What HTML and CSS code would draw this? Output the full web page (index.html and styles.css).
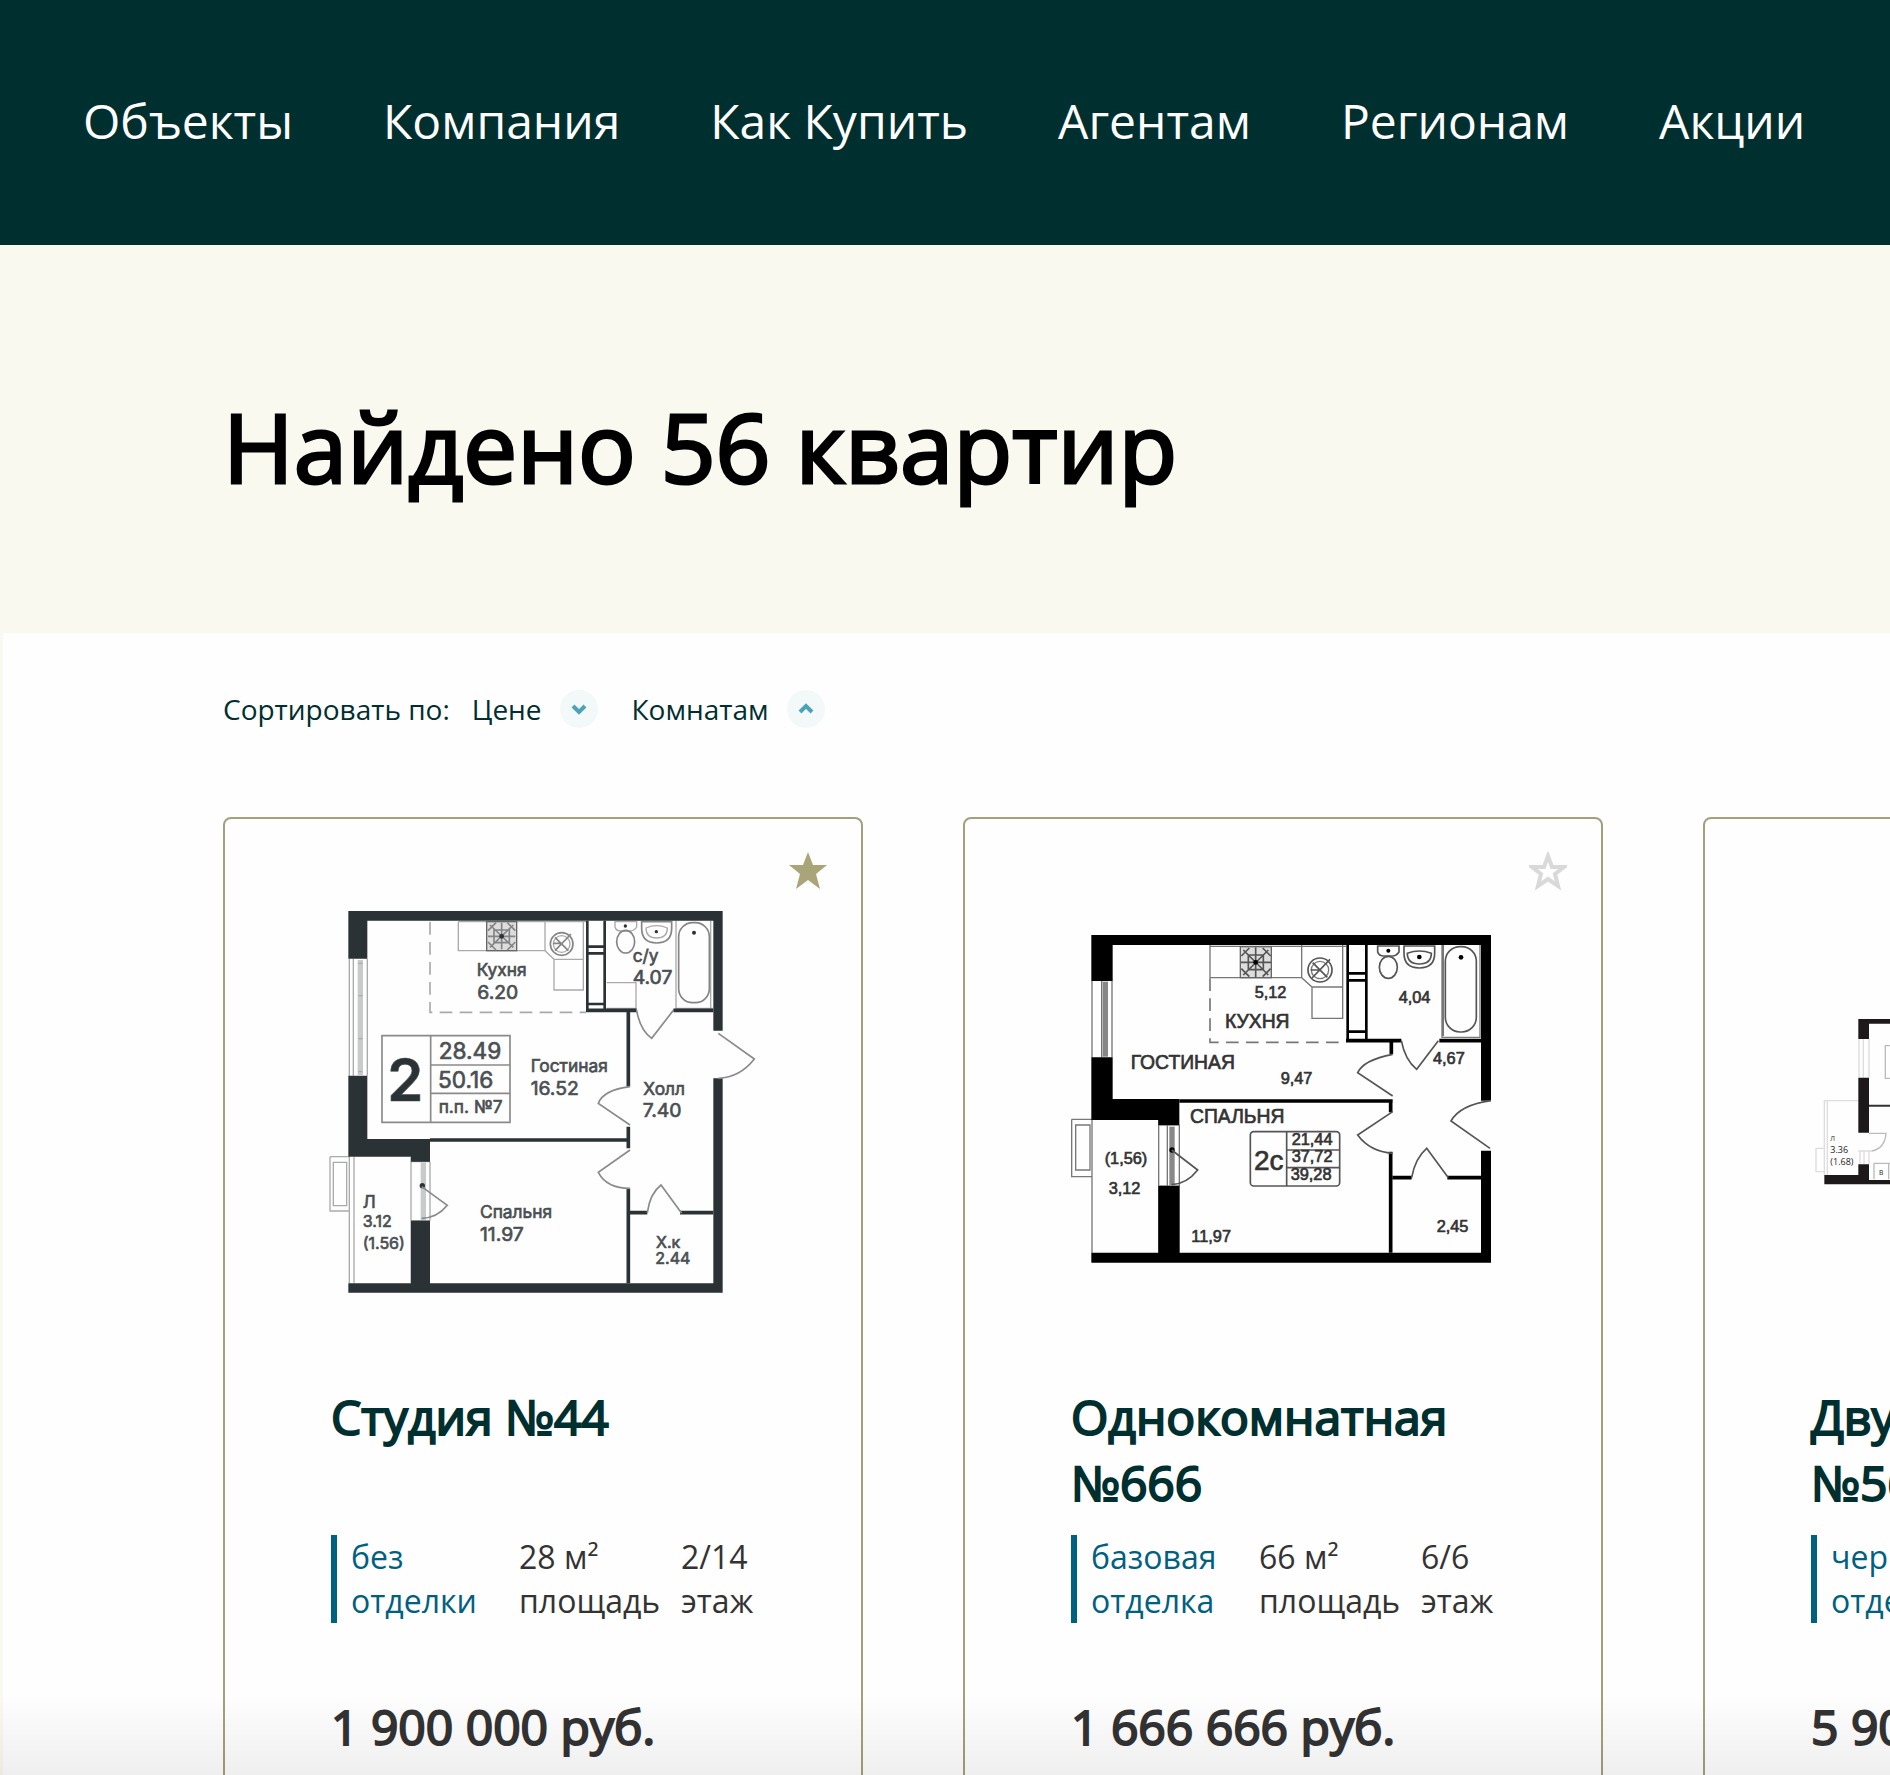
FILE: index.html
```html
<!DOCTYPE html>
<html lang="ru">
<head>
<meta charset="utf-8">
<meta name="viewport" content="width=device-width, initial-scale=1">
<title>Найдено 56 квартир</title>
<link rel="stylesheet" href="styles.css">
</head>
<body>
<header class="header">
  <nav class="nav">
    <a href="#">Объекты</a>
    <a href="#">Компания</a>
    <a href="#">Как Купить</a>
    <a href="#">Агентам</a>
    <a href="#">Регионам</a>
    <a href="#">Акции</a>
  </nav>
</header>
<section class="hero">
  <h1 class="hero-title">Найдено 56 квартир</h1>
</section>
<main class="results">
  <div class="sort">
    <span>Сортировать по:</span>
    <button class="sort-button" type="button">Цене
      <svg class="sort-icon" viewBox="0 0 38 38"><circle cx="19" cy="19" r="19"/><path d="M13 16l6 6 6-6"/></svg>
    </button>
    <button class="sort-button" type="button">Комнатам
      <svg class="sort-icon" viewBox="0 0 38 38"><circle cx="19" cy="19" r="19"/><path d="M13 22l6-6 6 6"/></svg>
    </button>
  </div>
  <div class="cards">
    <article class="card">
      <button class="favorite is-active" type="button" aria-label="Убрать из избранного">
        <svg viewBox="0 0 38 38"><path d="M19 0l5 13h14L27 22l4 15-12-9-12 9 4-15L0 13h14z"/></svg>
      </button>
      <svg class="plan plan-slate" viewBox="63 174 1272 1272">
        <g class="thin">
          <path d="M118 386V737M130 386V737M172 386V737"/>
          <path class="glass" d="M151 390V735"/>
          <path d="M145 497h12M145 626h12M145 400h12M145 725h12"/>
          <path class="dashed" d="M360 276V547H828"/>
          <path d="M445 275V362H705L732 388H820M705 275V362M732 388V480H820V275M445 275H828"/>
          <rect x="530" y="275" width="90" height="87" class="hatch"/>
          <path class="mid" d="M540 285l70 67M610 285l-70 67M575 278v80M534 319h82M552 300h46v38h-46zM534 302l24-24M592 278l24 24M534 336l24 24M592 360l24-24"/>
          <circle class="mid" cx="755" cy="342" r="34"/><circle cx="755" cy="342" r="25"/>
          <path class="mid" d="M735 322l40 40M735 362l48-50M730 340h22"/>
          <path d="M915 275h65v16q-8 12-20 12h-28q-14 0-17-12z"/><ellipse class="mid" cx="947" cy="335" rx="27" ry="34"/>
          <path class="mid" d="M995 275h90v20q0 44-45 44t-45-44z"/><path d="M1008 294q32-14 64 0 0 30-32 30t-32-30z"/>
          <path d="M1098 272V535H1208M1202 272V535M890 458H978V535H890"/>
          <rect class="mid" x="1106" y="278" width="92" height="240" rx="42"/>
          <path d="M60 980H118M60 980V1143H118M70 997H110V1127H70zM118 980V1360M132 980V1360M303 980V1360M303 995H360M303 1172H360M360 995V1172"/>
          <path class="glass" d="M340 997V1170"/>
        </g>
        <g class="dots"><circle cx="946" cy="288" r="5"/><circle cx="1039" cy="305" r="5"/><circle cx="1152" cy="308" r="6"/><circle cx="575" cy="319" r="7"/><circle cx="337" cy="1067" r="8"/></g>
        <path class="wall" d="M115 243H1238V602H1210V272H172V386H115zM115 737H172V927H360V995H303V980H115zM303 1172H360V1360H1210V745H1238V1388H115V1360H303z"/>
        <path class="partition" d="M360 930H960M955 540V770M955 890V955M955 1075V1360M955 1148H1012M1110 1148H1210M828 541H980M1090 541H1210"/>
        <path class="shaft" d="M832 272V545M884 272V545M832 350H884M832 370H884M832 522H884"/>
        <path class="door" d="M980 541Q990 600 1025 625L1090 541M1225 610L1333 687Q1290 742 1225 745M960 770Q880 780 865 820L960 885M960 960L865 1027Q890 1075 960 1075M1012 1148Q1020 1090 1053 1065L1115 1150M335 1070L412 1126Q380 1165 335 1165"/>
        <path class="door" d="M216 617H600V877H216zM362 617V877M362 705H600M362 790H600"/>
        <text class="t-xl" x="232" y="812">2</text>
        <text class="t-lg" x="386" y="686">28.49</text>
        <text class="t-lg" x="384" y="775">50.16</text>
        <text class="t-md" x="386" y="850">п.п. №7</text>
        <text class="t-md" x="500" y="437">Кухня</text>
        <text class="t-num" x="502" y="507">6.20</text>
        <text class="t-md" x="968" y="395">с/у</text>
        <text class="t-num" x="968" y="463">4.07</text>
        <text class="t-md" x="662" y="727">Гостиная</text>
        <text class="t-num" x="662" y="795">16.52</text>
        <text class="t-md" x="1000" y="795">Холл</text>
        <text class="t-num" x="998" y="862">7.40</text>
        <text class="t-md" x="510" y="1163">Спальня</text>
        <text class="t-num" x="510" y="1232">11.97</text>
        <text class="t-md" x="158" y="1133">Л</text>
        <text class="t-sm" x="158" y="1190">3.12</text>
        <text class="t-sm" x="158" y="1257">(1.56)</text>
        <text class="t-sm" x="1038" y="1254">Х.к</text>
        <text class="t-sm" x="1036" y="1302">2.44</text>
      </svg>
      <h2 class="card-title">Студия №44</h2>
      <div class="details">
        <div class="finish">без<br>отделки</div>
        <div>28 м²<br>площадь</div>
        <div>2/14<br>этаж</div>
      </div>
      <div class="price">1 900 000 руб.</div>
    </article>

    <article class="card">
      <button class="favorite" type="button" aria-label="Добавить в избранное">
        <svg viewBox="0 0 38 38"><path d="M19 4l4 11h12l-9 7 3 12-10-7-10 7 3-12-9-7h12z"/></svg>
      </button>
      <svg class="plan plan-black" viewBox="63 174 1272 1272">
        <g class="thin">
          <path d="M126 453V682M186 453V682M155 453V682"/>
          <path class="glass" d="M166 455V680"/>
          <path class="dashed" d="M480 445V637H888"/>
          <path d="M480 345V443H755L786 471H878M755 345V443M786 471V565H878V345M480 349H888"/>
          <rect x="571" y="350" width="93" height="93" class="hatch"/>
          <path class="mid" d="M580 360l75 75M655 360l-75 75M617 352v90M573 397h90M595 375h45v44h-45zM574 378l24-24M638 354l24 24M574 416l24 24M638 440l24-24"/>
          <circle class="mid" cx="810" cy="420" r="36"/><circle cx="810" cy="420" r="26"/>
          <path class="mid" d="M788 398l44 44M786 444l54-56M782 420h26"/>
          <path class="mid" d="M983 348h64v18q-8 12-20 12h-26q-14 0-18-12z"/><ellipse class="mid" cx="1015" cy="412" rx="27" ry="33"/>
          <path class="mid" d="M1062 348h92v22q0 44-46 44t-46-44z"/><path class="mid" d="M1072 370q36-14 72 0 0 32-36 32t-36-32z"/>
          <path d="M1176 345V622H1290V345M1180 345V618"/>
          <rect class="mid" x="1186" y="350" width="93" height="256" rx="44"/>
          <path d="M65 868H126M65 868V1040H126M77 885H120V1020H77zM126 870V1268M326 870V1268M325 885H388M325 1068H388M352 885V1068M388 885V1268"/>
          <path class="glass" d="M366 890V1065"/>
        </g>
        <g class="dots"><circle cx="1015" cy="362" r="6"/><circle cx="1108" cy="381" r="7"/><circle cx="1233" cy="382" r="7"/><circle cx="617" cy="397" r="7"/><circle cx="366" cy="960" r="8"/></g>
        <path class="wall" d="M124 315H1323V812H1293V345H188V453H124zM124 682H188V807H388V885H325V870H124zM325 1068H388V1268H1293V962H1323V1298H124V1268H325z"/>
        <path class="partition" d="M388 813H1028M1022 813V847M1022 965V1268M1028 1043H1085M1192 1043H1293M888 632H1054M1168 632H1293M1024 632V672"/>
        <path class="shaft" d="M893 345V635M949 345V635M893 430H949M893 451H949M893 605H949"/>
        <path class="door" d="M1054 632Q1065 690 1100 718L1165 632M1028 673Q940 690 923 728L1028 798M1028 845L923 915Q960 965 1028 970M1323 812Q1230 825 1203 873L1320 955M1085 1043Q1095 985 1130 955L1195 1043M365 960L443 1020Q410 1062 365 1064"/>
        <rect class="door" x="601" y="905" width="268" height="163" rx="10"/>
        <path class="door" d="M710 905V1068M710 960H869M710 1013H869"/>
        <text class="t-big" x="612" y="1020">2с</text>
        <text class="t-sm" x="725" y="946">21,44</text>
        <text class="t-sm" x="725" y="997">37,72</text>
        <text class="t-sm" x="722" y="1050">39,28</text>
        <text class="t-sm" x="614" y="505">5,12</text>
        <text class="t-md" x="525" y="595">КУХНЯ</text>
        <text class="t-md" x="242" y="718">ГОСТИНАЯ</text>
        <text class="t-sm" x="692" y="763">9,47</text>
        <text class="t-sm" x="1046" y="518">4,04</text>
        <text class="t-sm" x="1149" y="703">4,67</text>
        <text class="t-md" x="420" y="878">СПАЛЬНЯ</text>
        <text class="t-sm" x="164" y="1003">(1,56)</text>
        <text class="t-sm" x="176" y="1093">3,12</text>
        <text class="t-sm" x="424" y="1236">11,97</text>
        <text class="t-sm" x="1160" y="1205">2,45</text>
      </svg>
      <h2 class="card-title">Однокомнатная №666</h2>
      <div class="details">
        <div class="finish">базовая<br>отделка</div>
        <div>66 м²<br>площадь</div>
        <div>6/6<br>этаж</div>
      </div>
      <div class="price">1 666 666 руб.</div>
    </article>

    <article class="card">
      <svg class="plan plan-small" viewBox="363 264 1272 1272">
        <g class="thin">
          <path d="M507 717V833M520 717V833M537 717V833M403 1125V902H505M412 902V1125M403 1045H378V1115H403M510 1053V1093M522 1053V1093M537 1053V1093M505 1053H545"/>
          <path class="mid" d="M650 737H586V835H650M640 1090H552V1138M596 1090V1138M537 1000H588Q585 1045 545 1053"/>
        </g>
        <path class="wall" d="M505 657H1500V671H537V717H505zM505 833H537V998H505zM505 1093H537V1140H1500V1153H403V1125H505z"/>
        <path class="partition" d="M537 917H1500"/>
        <text class="t-sm" x="421" y="1023">Л</text>
        <text class="t-md" x="421" y="1060">3.36</text>
        <text class="t-md" x="421" y="1095">(1.68)</text>
        <text class="t-sm" x="567" y="1124">В</text>
      </svg>
      <h2 class="card-title">Двухкомнатная №56</h2>
      <div class="details">
        <div class="finish">черновая<br>отделка</div>
        <div>56 м²<br>площадь</div>
        <div>5/9<br>этаж</div>
      </div>
      <div class="price">5 900 000 руб.</div>
    </article>
  </div>
</main>
<div class="bottom-fade"></div>
</body>
</html>
```
FILE: styles.css
```css
* {
  box-sizing: border-box;
}

body {
  display: flex;
  flex-direction: column;
  height: 100vh;
  margin: 0;
  overflow: hidden;
  background: #f9f9ef;
  color: #002f2f;
  font-family: "Open Sans", "Noto Sans", sans-serif;
}

button {
  padding: 0;
  border: 0;
  background: none;
  color: inherit;
  font: inherit;
  cursor: pointer;
}

.header {
  flex: none;
  padding: 88px 0 92px 83px;
  background: #002f2f;
}

.nav {
  display: flex;
  gap: 90px;
  font-size: 48px;
  line-height: 65px;
  white-space: nowrap;
}

.nav a {
  color: #fff;
  text-decoration: none;
}

.hero {
  flex: none;
  padding: 135px 223px 122px;
}

.hero-title {
  margin: 0;
  color: #000;
  font-size: 96px;
  font-weight: 400;
  line-height: 131px;
  -webkit-text-stroke: 3px currentColor;
}

.results {
  flex: 1;
  min-height: 0;
  margin-left: 3px;
  padding: 57px 0 0 220px;
  overflow: hidden;
  background: #fefefe;
}

.sort {
  display: flex;
  align-items: center;
  gap: 22px;
  margin-bottom: 89px;
  font-size: 28px;
  line-height: 38px;
}

.sort-button {
  display: flex;
  align-items: center;
  gap: 18px;
  margin-right: 12px;
}

.sort-icon {
  width: 38px;
  height: 38px;
}

.sort-icon circle {
  fill: #f3f8f9;
}

.sort-icon path {
  fill: none;
  stroke: #4ba3b7;
  stroke-width: 4;
}

.cards {
  display: flex;
  gap: 100px;
}

.card {
  position: relative;
  flex: 0 0 640px;
  padding: 69px 106px;
  border: 2px solid #a3a07d;
  border-radius: 8px;
}

.favorite {
  position: absolute;
  top: 33px;
  right: 34px;
  width: 38px;
  height: 38px;
}

.favorite svg {
  display: block;
  fill: none;
  stroke: #d9d9d9;
  stroke-width: 4;
}

.favorite.is-active svg {
  fill: #a9a579;
  stroke: none;
}

.plan {
  display: block;
  width: 100%;
  margin-bottom: 72px;
  overflow: visible;
}

.card-title {
  min-height: 132px;
  margin: 0 0 19px;
  font-size: 48px;
  font-weight: 400;
  line-height: 66px;
  -webkit-text-stroke: 2px currentColor;
}

.details {
  display: grid;
  grid-template-columns: 188px 162px auto;
  margin-bottom: 71px;
  color: #333;
  font-size: 32px;
  line-height: 44px;
}

.finish {
  padding-left: 14px;
  border-left: 6px solid #00607f;
  color: #00607f;
}

.price {
  color: #333;
  font-size: 48px;
  line-height: 66px;
  white-space: nowrap;
  -webkit-text-stroke: 2px currentColor;
}

.bottom-fade {
  position: fixed;
  right: 0;
  bottom: 0;
  left: 0;
  height: 80px;
  background: linear-gradient(rgba(0, 0, 0, 0), rgba(0, 0, 0, 0.06));
  pointer-events: none;
}

/* Floor plans */
.thin,
.door {
  fill: none;
  stroke: #aaa;
  stroke-width: 4;
}

.mid {
  fill: none;
  stroke: #858585;
  stroke-width: 5;
}

.glass {
  stroke: #c9cbcb;
  stroke-width: 16;
}

.dashed {
  stroke-width: 5;
  stroke-dasharray: 38 22;
}

.hatch {
  fill: #ddd;
  stroke: #666;
}

.partition,
.shaft {
  fill: none;
  stroke-width: 11;
}

.shaft {
  stroke-width: 8;
}

.door {
  stroke: #8a8a8a;
  stroke-width: 5;
}

.plan-slate {
  fill: #2a3235;
  stroke: none;
  font-family: Inter, sans-serif;
}

.plan-slate .partition,
.plan-slate .shaft {
  stroke: #2a3235;
}

.plan-slate text {
  fill: #4a4f52;
  stroke: #4a4f52;
  stroke-width: 2;
}

.plan-slate .t-xl {
  fill: #2a3235;
  font-size: 174px;
  font-weight: 600;
}

.plan-slate .t-lg {
  font-size: 68px;
}

.plan-slate .t-md {
  font-size: 52px;
}

.plan-slate .t-num {
  font-size: 58px;
}

.plan-slate .t-sm {
  font-size: 48px;
}

.plan-black {
  fill: #000;
  font-family: "Liberation Sans", Arial, sans-serif;
}

.plan-black .thin {
  stroke: #777;
}

.plan-black .mid {
  stroke: #555;
}

.plan-black .door {
  stroke: #555;
}

.plan-black .glass {
  stroke: #888;
}

.plan-black .partition,
.plan-black .shaft {
  stroke: #000;
}

.plan-black text {
  fill: #333;
  stroke: #333;
  stroke-width: 2;
}

.plan-black .t-big {
  font-size: 84px;
}

.plan-black .t-md {
  font-size: 58px;
}

.plan-black .t-sm {
  font-size: 49px;
}

.plan-small {
  fill: #1d191b;
  font-family: "Open Sans", sans-serif;
}

.plan-small .thin {
  stroke: #ddd;
}

.plan-small .mid {
  stroke: #bbb;
  stroke-width: 4;
}

.plan-small .partition {
  stroke: #333;
  stroke-width: 6;
}

.plan-small .t-md {
  font-size: 27px;
}

.plan-small .t-sm {
  font-size: 20px;
}
```
